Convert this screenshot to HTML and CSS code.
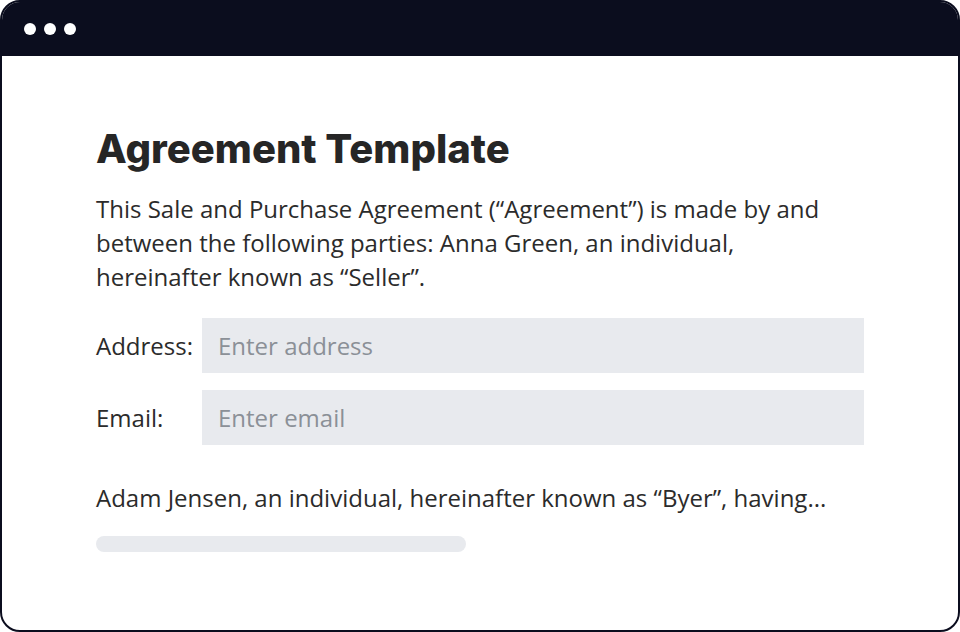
FILE: index.html
```html
<!DOCTYPE html>
<html lang="en">
<head>
  <meta charset="UTF-8" />
  <title>Agreement Template</title>
  <link rel="stylesheet" href="styles.css">
</head>
<body>
  <div class="window">
    <div class="titlebar">
      <span class="dot"></span>
      <span class="dot"></span>
      <span class="dot"></span>
    </div>
    <div class="content">
      <h1>Agreement Template</h1>
      <p class="intro">This Sale and Purchase Agreement (“Agreement”) is made by and between the following parties: Anna Green, an individual, hereinafter known as “Seller”.</p>

      <div class="field">
        <label for="address">Address:</label>
        <input type="text" id="address" placeholder="Enter address" />
      </div>
      <div class="field">
        <label for="email">Email:</label>
        <input type="text" id="email" placeholder="Enter email" />
      </div>

      <p class="outro">Adam Jensen, an individual, hereinafter known as “Byer”, having...</p>
      <div class="skeleton"></div>
    </div>
  </div>
</body>
</html>
```

FILE: styles.css
```css
* {
  box-sizing: border-box;
}
html, body {
  margin: 0;
  padding: 0;
  background: #ffffff;
}
body {
  width: 960px;
  height: 632px;
  font-family: 'Open Sans', sans-serif;
  color: #2b2b2b;
}
.window {
  width: 960px;
  height: 632px;
  border: 2px solid #0b0d1e;
  border-radius: 20px;
  overflow: hidden;
  display: flex;
  flex-direction: column;
}
.titlebar {
  height: 54px;
  background-color: #0b0d1e;
  display: flex;
  align-items: center;
  gap: 8px;
  padding: 0 0 0 22px;
  flex-shrink: 0;
}
.dot {
  width: 12px;
  height: 12px;
  border-radius: 50%;
  background: #ffffff;
}
.content {
  padding: 70px 0 0 94px;
}
h1 {
  font-family: 'Inter', sans-serif;
  font-weight: 800;
  font-size: 40px;
  color: #262626;
  margin: 0 0 20px;
  line-height: 46px;
}
.intro {
  font-size: 24px;
  line-height: 34px;
  margin: 0 0 24px;
  width: 740px;
}
.field {
  display: flex;
  align-items: center;
  margin-bottom: 17px;
}
.field label {
  width: 106px;
  font-size: 24px;
}
.field input {
  width: 662px;
  height: 55px;
  border: none;
  background-color: #e8eaee;
  padding: 0 16px;
  font-family: 'Open Sans', sans-serif;
  font-size: 24px;
  color: #2b2b2b;
  outline: none;
}
.field input::placeholder {
  color: #8b9097;
}
.outro {
  font-size: 24px;
  line-height: 34px;
  margin: 36px 0 21px;
}
.skeleton {
  width: 370px;
  height: 16px;
  border-radius: 8px;
  background-color: #e8eaee;
}
```
